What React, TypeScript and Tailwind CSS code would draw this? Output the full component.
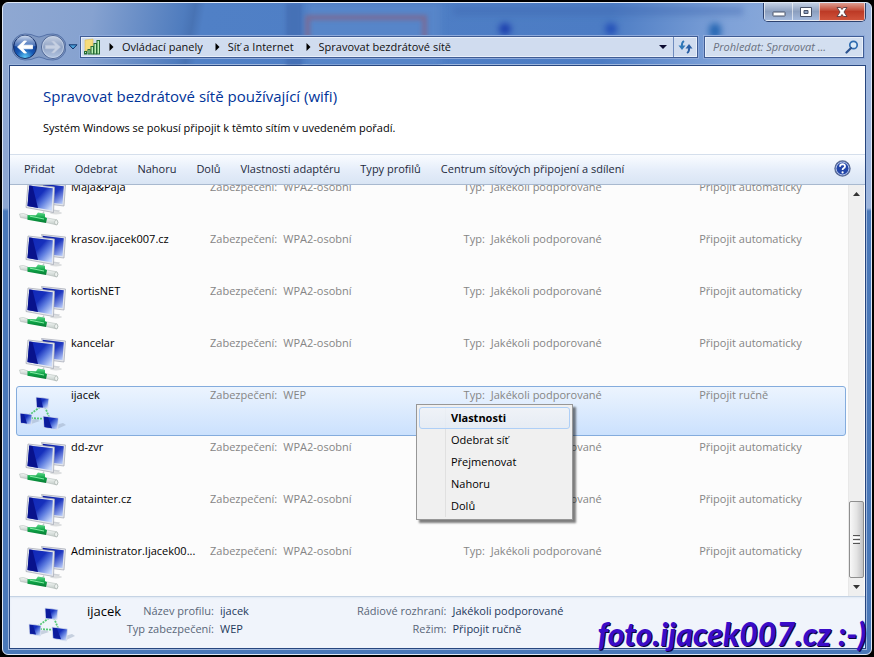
import React, { useState } from 'react';
import { clsx } from 'clsx';

type Network = {
  name: string;
  security: string;
  connect: string;
  adhoc?: boolean;
};

const networks: Network[] = [
  { name: 'Maja&Paja', security: 'WPA2-osobní', connect: 'Připojit automaticky' },
  { name: 'krasov.ijacek007.cz', security: 'WPA2-osobní', connect: 'Připojit automaticky' },
  { name: 'kortisNET', security: 'WPA2-osobní', connect: 'Připojit automaticky' },
  { name: 'kancelar', security: 'WPA2-osobní', connect: 'Připojit automaticky' },
  { name: 'ijacek', security: 'WEP', connect: 'Připojit ručně', adhoc: true },
  { name: 'dd-zvr', security: 'WPA2-osobní', connect: 'Připojit automaticky' },
  { name: 'datainter.cz', security: 'WPA2-osobní', connect: 'Připojit automaticky' },
  { name: 'Administrator.Ijacek00...', security: 'WPA2-osobní', connect: 'Připojit automaticky' },
];

const toolbar = [
  'Přidat',
  'Odebrat',
  'Nahoru',
  'Dolů',
  'Vlastnosti adaptéru',
  'Typy profilů',
  'Centrum síťových připojení a sdílení',
];

const crumbs = ['Ovládací panely', 'Síť a Internet', 'Spravovat bezdrátové sítě'];

const menuItems = ['Vlastnosti', 'Odebrat síť', 'Přejmenovat', 'Nahoru', 'Dolů'];

// Gradients shared by all of the icons
function IconDefs() {
  return (
    <svg width="0" height="0" className="absolute" aria-hidden="true">
      <defs>
        <linearGradient id="screen" x1="0.1" y1="0" x2="1" y2="0.8">
          <stop offset="0" stopColor="#1026b8" />
          <stop offset="0.45" stopColor="#1630bc" />
          <stop offset="0.7" stopColor="#5f7ee0" />
          <stop offset="1" stopColor="#c8d8fa" />
        </linearGradient>
        <linearGradient id="screenBack" x1="0.2" y1="0" x2="1" y2="0.9">
          <stop offset="0" stopColor="#0c1ea4" />
          <stop offset="0.5" stopColor="#2038c0" />
          <stop offset="1" stopColor="#b4c8f8" />
        </linearGradient>
        <linearGradient id="pipe" x1="0" y1="0" x2="0" y2="1">
          <stop offset="0" stopColor="#f4f8f6" />
          <stop offset="1" stopColor="#c0cac6" />
        </linearGradient>
        <linearGradient id="pipeGreen" x1="0" y1="0" x2="0" y2="1">
          <stop offset="0" stopColor="#5fd98a" />
          <stop offset="0.5" stopColor="#0fa548" />
          <stop offset="1" stopColor="#067a33" />
        </linearGradient>
        <radialGradient id="orb" cx="0.5" cy="0.95" r="0.75">
          <stop offset="0" stopColor="#5cc8f5" />
          <stop offset="0.5" stopColor="#1658b4" />
          <stop offset="1" stopColor="#14398c" />
        </radialGradient>
        <linearGradient id="orbShine" x1="0" y1="0" x2="0" y2="1">
          <stop offset="0" stopColor="#e6f0fc" stopOpacity="0.9" />
          <stop offset="1" stopColor="#7fa5dc" stopOpacity="0.4" />
        </linearGradient>
        <linearGradient id="orbOff" x1="0" y1="0" x2="0" y2="1">
          <stop offset="0" stopColor="#c9d3e4" />
          <stop offset="0.5" stopColor="#8fa2c4" />
          <stop offset="1" stopColor="#b4c6e2" />
        </linearGradient>
      </defs>
    </svg>
  );
}

function NetworkIcon() {
  return (
    <svg width="50" height="48" viewBox="0 0 50 48" aria-hidden="true">
      <ellipse cx="38" cy="33" rx="6" ry="1.4" fill="#dcdedf" />
      <path d="M23.500 2.500 L47.500 5 L46 26 L30 24 Z" fill="#e2e5ec" stroke="#a3a8b5" strokeWidth="0.7" />
      <path d="M24.500 3.800 L45.800 6.200 L44.500 24 L30 22.500 Z" fill="url(#screenBack)" />
      <path d="M32 29 L42 30.500 L41 32 L32 31 Z" fill="#d0d3d7" />
      <path d="M10 4 L36.500 7 L35.500 32.500 L8 27.500 Z" fill="#e6e9ef" stroke="#a0a5b2" strokeWidth="0.7" />
      <path d="M11.300 5.500 L34.800 8.300 L33.800 30.500 L9.500 26 Z" fill="url(#screen)" />
      <path d="M11.300 5.500 L14.500 5.900 L20 28 L9.500 26 Z" fill="#08128c" />
      <path d="M26 31.500 L24 35" stroke="#c1c7ca" strokeWidth="1.500" />
      <path d="M1.500 34 Q5 32.500 10 35 L10 39 L2.500 37.500 Z" fill="url(#pipe)" stroke="#aab5b0" strokeWidth="0.5" />
      <path d="M28 37.800 L39 39.800 Q41 42.300 39 45 L28 42.500 Z" fill="url(#pipe)" stroke="#aab5b0" strokeWidth="0.5" />
      <ellipse cx="38.200" cy="42.400" rx="1.600" ry="2.400" fill="#eef2f0" stroke="#98a29e" strokeWidth="0.5" />
      <path d="M9.500 34.900 L18 35.200 L20 32.500 L27 33.800 L27 37 L29 38.300 L28 43 L9.500 39.800 Z" fill="url(#pipeGreen)" />
      <path d="M12 36.200 L26 39" stroke="#8ff0ae" strokeWidth="0.9" />
    </svg>
  );
}

function AdhocIcon() {
  return (
    <svg width="50" height="48" viewBox="0 0 50 48" aria-hidden="true">
      <path d="M13 36 L22 33 L18 31 L12 32 Z M39 41 L48 37 L45 35 L38 37 Z" fill="#9bacc4" opacity="0.5" />
      <path d="M22 19 L10 28 M27 19 L31 29 M13 30 L29 31" stroke="#55c877" strokeWidth="1.800" strokeDasharray="2 1" fill="none" />
      <path d="M18 9 L31 10.500 L30 20.500 L18.500 19.500 Z" fill="url(#screen)" stroke="#dbe2ee" strokeWidth="0.8" />
      <path d="M18.800 10 L23 10.500 L25 19.500 L19 19 Z" fill="#0c1c9c" />
      <path d="M2 25 L14 26.500 L13.500 37 L2.500 35 Z" fill="url(#screen)" stroke="#dbe2ee" strokeWidth="0.8" />
      <path d="M2.800 26 L6 26.300 L9 35.500 L3 34.500 Z" fill="#0c1c9c" />
      <path d="M25 28 L40.500 30 L39.500 42 L26 39.500 Z" fill="url(#screen)" stroke="#dbe2ee" strokeWidth="0.8" />
      <path d="M26 29 L30 29.500 L34 40.200 L26.700 39 Z" fill="#0c1c9c" />
    </svg>
  );
}

function BackForward() {
  return (
    <div className="relative flex items-center">
      <svg width="54" height="28" viewBox="0 0 54 28" aria-hidden="true">
        <path d="M13 1 Q20 1 23 3 Q27 5 31 3 Q34 1 41 1 A13 13 0 0 1 41 27 Q34 27 31 25 Q27 23 23 25 Q20 27 13 27 A13 13 0 0 1 13 1 Z" fill="#8099c3" stroke="#5572a8" strokeWidth="1" />
        <circle cx="13" cy="14" r="11.500" fill="url(#orb)" stroke="#173067" strokeWidth="1" />
        <path d="M2.500 13 A10.500 10.500 0 0 1 23.500 13 Q13 16 2.500 13 Z" fill="url(#orbShine)" />
        <path d="M5.500 14 L12 8 L14.500 8 L11 12.200 L20.500 12.200 L20.500 15.800 L11 15.800 L14.500 20 L12 20 Z" fill="#fff" stroke="#fff" strokeWidth="0.8" strokeLinejoin="round" />
        <circle cx="41" cy="14" r="11.500" fill="url(#orbOff)" stroke="#4d6595" strokeWidth="1" />
        <circle cx="41" cy="14" r="10.500" fill="none" stroke="#c5d3e9" strokeWidth="0.8" />
        <path d="M48.500 14 L42 8 L39.500 8 L43 12.200 L33.500 12.200 L33.500 15.800 L43 15.800 L39.500 20 L42 20 Z" fill="#c6d0e2" stroke="#b8c4da" strokeWidth="0.6" strokeLinejoin="round" />
      </svg>
      <button type="button" aria-label="Zpět" className="absolute left-0 size-7 rounded-full" />
      <button type="button" aria-label="Vpřed" disabled className="absolute right-0 size-7 rounded-full" />
    </div>
  );
}

function CaptionButtons() {
  const base = 'flex h-[18px] items-center justify-center border-white/60';
  return (
    <div className="flex shrink-0 overflow-hidden rounded-b-[5px] border border-t-0 border-[#2c416e]">
      <button type="button" aria-label="Minimalizovat" className={clsx(base, 'w-7 border-b border-l bg-linear-to-b from-[#c3d0e4] via-[#8c9fbf] via-50% to-[#a3b9dc]')}>
        <svg width="14" height="14" viewBox="0 0 14 14">
          <rect x="1" y="7" width="12" height="4" rx="0.500" fill="#fff" stroke="#485268" />
        </svg>
      </button>
      <button type="button" aria-label="Maximalizovat" className={clsx(base, 'w-[27px] border-b border-l bg-linear-to-b from-[#c3d0e4] via-[#8c9fbf] via-50% to-[#a3b9dc]')}>
        <svg width="14" height="14" viewBox="0 0 14 14">
          <path d="M1.500 2.500 H12.500 V11.500 H1.500 Z M5 5.500 V8.500 H9 V5.500 Z" fill="#fff" fillRule="evenodd" stroke="#485268" />
        </svg>
      </button>
      <button type="button" aria-label="Zavřít" className={clsx(base, 'w-[46px] border-x border-b bg-linear-to-b from-[#dc9c90] via-[#bd3a26] via-50% to-[#d0523a]')}>
        <svg width="14" height="14" viewBox="0 0 14 14">
          <path d="M2 2.500 H5.500 L7 4.500 L8.500 2.500 H12 L9 7 L12 11.500 H8.500 L7 9.500 L5.500 11.500 H2 L5 7 Z" fill="#fff" stroke="#5a3a40" strokeWidth="0.9" />
        </svg>
      </button>
    </div>
  );
}

function AddressBar() {
  return (
    <nav className="flex h-[22px] min-w-0 flex-1 items-center border border-[#3f5c94] bg-[#d0dcef] shadow-[inset_0_0_0_1px_#e9f0fa,0_0_0_1px_#8eaadb]">
      <svg className="ml-[2px] shrink-0" width="18" height="18" viewBox="0 0 18 18" aria-hidden="true">
        <path d="M2 2 L10 1 V13 H2 Z" fill="#f5dc7c" stroke="#d8b950" strokeWidth="0.6" />
        <g fill="#bdf0b4" stroke="#256b35" strokeWidth="1">
          <rect x="1.500" y="13.500" width="2" height="2.500" />
          <rect x="5" y="11.500" width="2" height="4.500" />
          <rect x="8" y="8.500" width="2.500" height="7.500" />
          <rect x="11" y="5.500" width="2.500" height="10.500" />
          <rect x="14" y="2.500" width="2.500" height="13.500" />
        </g>
      </svg>
      {crumbs.map((crumb) => (
        <React.Fragment key={crumb}>
          <svg className="mx-2 shrink-0" width="5" height="8" viewBox="0 0 5 8" aria-hidden="true">
            <path d="M0.500 0 L4.500 4 L0.500 8 Z" fill="#000" />
          </svg>
          <a href="#" className="mr-1 truncate text-[#101010]">{crumb}</a>
        </React.Fragment>
      ))}
      <button type="button" aria-label="Předchozí umístění" className="ml-auto flex h-full w-5 items-center justify-center">
        <svg width="8" height="4" viewBox="0 0 8 4"><path d="M0 0 H8 L4 4 Z" fill="#0a0a30" /></svg>
      </button>
      <button type="button" aria-label="Aktualizovat" className="flex h-full w-6 items-center justify-center border-l border-[#6f8cbe]">
        <svg width="15" height="14" viewBox="0 0 15 14">
          <path d="M6 1 Q3.500 2.500 4 6" stroke="#2f78b8" strokeWidth="2" fill="none" />
          <path d="M0.500 5.500 H7.500 L4 10 Z" fill="#2f78b8" />
          <path d="M9 13 Q11.500 11.500 11 8" stroke="#2a5fa5" strokeWidth="2" fill="none" />
          <path d="M7.500 8.500 H14.500 L11 4 Z" fill="#2a5fa5" />
        </svg>
      </button>
    </nav>
  );
}

function TitleArea() {
  return (
    <header className="relative">
      {/* soft shapes showing through the glass */}
      <div className="absolute inset-0 overflow-hidden" aria-hidden="true">
        <div className="absolute left-[277px] top-0 h-16 w-4 bg-[#3f68ac]/60 blur-[2px]" />
        <div className="absolute left-[298px] top-0 h-16 w-[134px] bg-[#5d8acb]/60 blur-[3px]" />
        <div className="absolute left-[296px] top-3 h-8 w-[122px] border-[5px] border-[#766d9a] blur-[2px]" />
        <div className="absolute left-[444px] top-1 h-2 w-[290px] bg-[#3c64ac]/40 blur-[3px]" />
        <div className="absolute left-[490px] top-5 size-3 rounded-full bg-[#1c3fae] blur-[3px]" />
        <div className="absolute left-[596px] top-5 size-3 rounded-full bg-[#2450b8] blur-[3px]" />
        <div className="absolute left-[700px] top-5 h-4 w-3 rounded-full bg-[#2868b4] blur-[3px]" />
      </div>
      <div className="relative flex justify-end">
        <CaptionButtons />
      </div>
      <div className="relative flex h-[43px] items-center pb-px pl-[3px]">
        <div className="mt-2 flex shrink-0 items-center">
          <BackForward />
          <button type="button" aria-label="Poslední stránky" className="flex w-[14px] justify-center">
            <svg width="10" height="6" viewBox="0 0 10 6"><path d="M1 0.800 H9 L5 5 Z" fill="#4aa0d8" stroke="#12356e" /></svg>
          </button>
        </div>
        <div className="mt-2 flex min-w-0 flex-1 items-center gap-[6px] pr-[2px]">
          <AddressBar />
          <label className="flex h-[22px] w-40 shrink-0 items-center border border-[#3f5c94] bg-[#d3dff0] pr-1 pl-2 shadow-[inset_0_0_0_1px_#e9f0fa,0_0_0_1px_#8eaadb]">
            <span className="sr-only">Prohledat</span>
            <input type="text" placeholder="Prohledat: Spravovat ..." className="min-w-0 flex-1 bg-transparent italic outline-none placeholder:text-[#6a7180]" />
            <svg width="14" height="14" viewBox="0 0 14 14" aria-hidden="true">
              <circle cx="8.500" cy="5" r="3.700" fill="#dcebf8" stroke="#2f6cb0" strokeWidth="1.700" />
              <path d="M6 8 L1.500 12.500" stroke="#2b528e" strokeWidth="2.200" strokeLinecap="round" />
            </svg>
          </label>
        </div>
      </div>
    </header>
  );
}

function ContextMenu() {
  return (
    <div role="menu" className="absolute left-[399px] top-[17px] z-10 w-[157px] border border-[#979797] bg-[#f0f0f0] p-[2px] text-black shadow-[3px_3px_2px_rgba(0,0,0,0.5)]">
      <div className="absolute inset-y-[2px] left-7 w-px bg-[#e0e0e0]" />
      {menuItems.map((item, i) => (
        <button
          key={item}
          type="button"
          role="menuitem"
          className={clsx(
            'relative flex h-[22px] w-full items-center rounded-[3px] border pl-[31px] text-left',
            i === 0 ? 'border-[#aecff7] bg-linear-to-b from-[#eff3f9]/80 to-[#e3ebf5]/80 font-bold' : 'border-transparent'
          )}
        >
          {item}
        </button>
      ))}
    </div>
  );
}

function NetworkRow({ network, selected, onSelect }: { network: Network; selected: boolean; onSelect: () => void }) {
  return (
    <li
      onClick={onSelect}
      className={clsx(
        'relative flex h-[50px] shrink-0 rounded-[3px] border',
        selected ? 'border-[#84acdd] bg-linear-to-b from-[#ecf4fe] to-[#cbe1fd]' : 'border-transparent'
      )}
    >
      <div className="w-[54px] shrink-0 pt-px pl-px">{network.adhoc ? <AdhocIcon /> : <NetworkIcon />}</div>
      <div className="grid h-4 min-w-0 flex-1 grid-cols-[139px_254fr_236fr_146fr] text-[#858585]">
        <span className="whitespace-nowrap text-black">{network.name}</span>
        <span className="flex gap-[6px]"><span>Zabezpečení:</span><span>{network.security}</span></span>
        <span className="flex gap-[6px]"><span>Typ:</span><span>Jakékoli podporované</span></span>
        <span className="whitespace-nowrap">{network.connect}</span>
      </div>
      {network.adhoc && <ContextMenu />}
    </li>
  );
}

function Scrollbar() {
  return (
    <div className="flex w-4 shrink-0 flex-col items-center border-l border-[#e8e8e8] bg-[#efefef]">
      <button type="button" aria-label="Posunout nahoru" className="flex h-[18px] w-full items-center justify-center">
        <svg width="7" height="4" viewBox="0 0 7 4"><path d="M0 4 L3.500 0 L7 4 Z" fill="#333" /></svg>
      </button>
      <div className="flex min-h-0 w-full flex-1 flex-col justify-end">
        <div className="flex h-[77px] w-full flex-col items-center justify-center gap-px rounded-[2px] border border-[#8f8f8f] bg-linear-to-r from-[#f8f8f8] via-[#e4e4e4] to-[#c2c2c4]">
          <span className="h-px w-[7px] bg-[#555]" />
          <span className="h-px w-[7px] bg-[#fff]" />
          <span className="h-px w-[7px] bg-[#555]" />
          <span className="h-px w-[7px] bg-[#fff]" />
          <span className="h-px w-[7px] bg-[#555]" />
        </div>
      </div>
      <button type="button" aria-label="Posunout dolů" className="flex h-[18px] w-full items-center justify-center">
        <svg width="7" height="4" viewBox="0 0 7 4"><path d="M0 0 H7 L3.500 4 Z" fill="#333" /></svg>
      </button>
    </div>
  );
}

function DetailsPane() {
  return (
    <footer className="flex h-[52px] shrink-0 border-t border-[#c5d3e4] bg-[#f0f4fb] text-[#1e395b] shadow-[inset_0_1px_2px_#dfe8f3]">
      <div className="w-[77px] shrink-0 pt-[2px] pl-[17px]"><AdhocIcon /></div>
      <h2 className="w-9 shrink-0 pt-[5px] text-[13px] leading-[18px] text-black">ijacek</h2>
      <dl className="grid shrink-0 grid-cols-[91px_auto] content-start gap-x-[6px] pt-[5px] leading-[18px]">
        <dt className="text-right whitespace-nowrap text-[#5a6779]">Název profilu:</dt>
        <dd>ijacek</dd>
        <dt className="text-right whitespace-nowrap text-[#5a6779]">Typ zabezpečení:</dt>
        <dd>WEP</dd>
      </dl>
      <dl className="ml-[108px] grid shrink-0 grid-cols-[auto_auto] content-start gap-x-[6px] pt-[5px] leading-[18px]">
        <dt className="text-right text-[#5a6779]">Rádiové rozhraní:</dt>
        <dd>Jakékoli podporované</dd>
        <dt className="text-right text-[#5a6779]">Režim:</dt>
        <dd>Připojit ručně</dd>
      </dl>
    </footer>
  );
}

export default function App() {
  const [selected, setSelected] = useState('ijacek');

  return (
    <div className="relative flex h-screen flex-col border-2 border-black bg-black font-['Open_Sans','Noto_Sans',sans-serif] text-[11px] leading-4">
      <IconDefs />
      <div className="flex min-h-0 flex-1 flex-col overflow-hidden rounded-[6px] border border-[#dfe8f6] bg-[linear-gradient(180deg,transparent_205px,#4a78b8_208px),linear-gradient(100deg,#8fa8d2_0px,#86a2d0_90px,#4f7cbe_180px,#4873b4_190px,#5080c6_200px,#4c7cc4_600px,#7fa2d8_720px,#9db5dc_860px)] pr-[5px] pb-[5px] pl-[6px]">
        <TitleArea />
        <main className="flex min-h-0 flex-1 flex-col border border-[#27467f] bg-white shadow-[0_0_0_1px_#9fb7dd]">
          <section className="h-[88px] shrink-0 px-[33px] pt-5">
            <h1 className="text-[15px] leading-5 text-[#003399]">Spravovat bezdrátové sítě používající (wifi)</h1>
            <p className="pt-[14px] text-black">Systém Windows se pokusí připojit k těmto sítím v uvedeném pořadí.</p>
          </section>

          <div className="flex h-[31px] shrink-0 items-center gap-5 border-t border-b border-t-[#d5dfec] border-b-[#a8b9cf] bg-linear-to-b from-[#fafcff] via-[#e6eefa] via-50% to-[#d9e5f4] px-[14px] pb-[2px] text-[#1e2a3b]">
            {toolbar.map((label) => (
              <button key={label} type="button" className="whitespace-nowrap">{label}</button>
            ))}
            <button type="button" aria-label="Nápověda" className="ml-auto">
              <svg width="17" height="17" viewBox="0 0 17 17">
                <circle cx="8.500" cy="8.500" r="7.600" fill="#2346a8" stroke="#5c6c92" strokeWidth="1.200" />
                <circle cx="8.500" cy="8.500" r="6.400" fill="none" stroke="#c3d0ee" strokeWidth="0.9" />
                <path d="M6 6.700 Q6 4.200 8.600 4.200 Q11.200 4.300 11 6.500 Q10.800 7.700 9.500 8.300 Q8.600 8.800 8.600 10" fill="none" stroke="#fff" strokeWidth="1.800" />
                <circle cx="8.600" cy="12.400" r="1.100" fill="#fff" />
              </svg>
            </button>
          </div>

          <div className="flex min-h-0 flex-1 bg-[#fcfcfc] pr-px">
            <ul className="flex min-w-0 flex-1 flex-col justify-end gap-[2px] overflow-hidden pt-1 pr-[2px] pb-1 pl-[6px]">
              {networks.map((n) => (
                <NetworkRow key={n.name} network={n} selected={n.name === selected} onSelect={() => setSelected(n.name)} />
              ))}
            </ul>
            <Scrollbar />
          </div>

          <DetailsPane />
        </main>
      </div>

      <div className="pointer-events-none absolute right-[6px] bottom-[3px] font-['Lato',sans-serif] text-[32px] leading-9 font-black whitespace-nowrap text-[#3a0cc8] italic [text-shadow:1px_1px_0_#0a0440]">
        foto.ijacek007.cz :-)
      </div>
    </div>
  );
}
